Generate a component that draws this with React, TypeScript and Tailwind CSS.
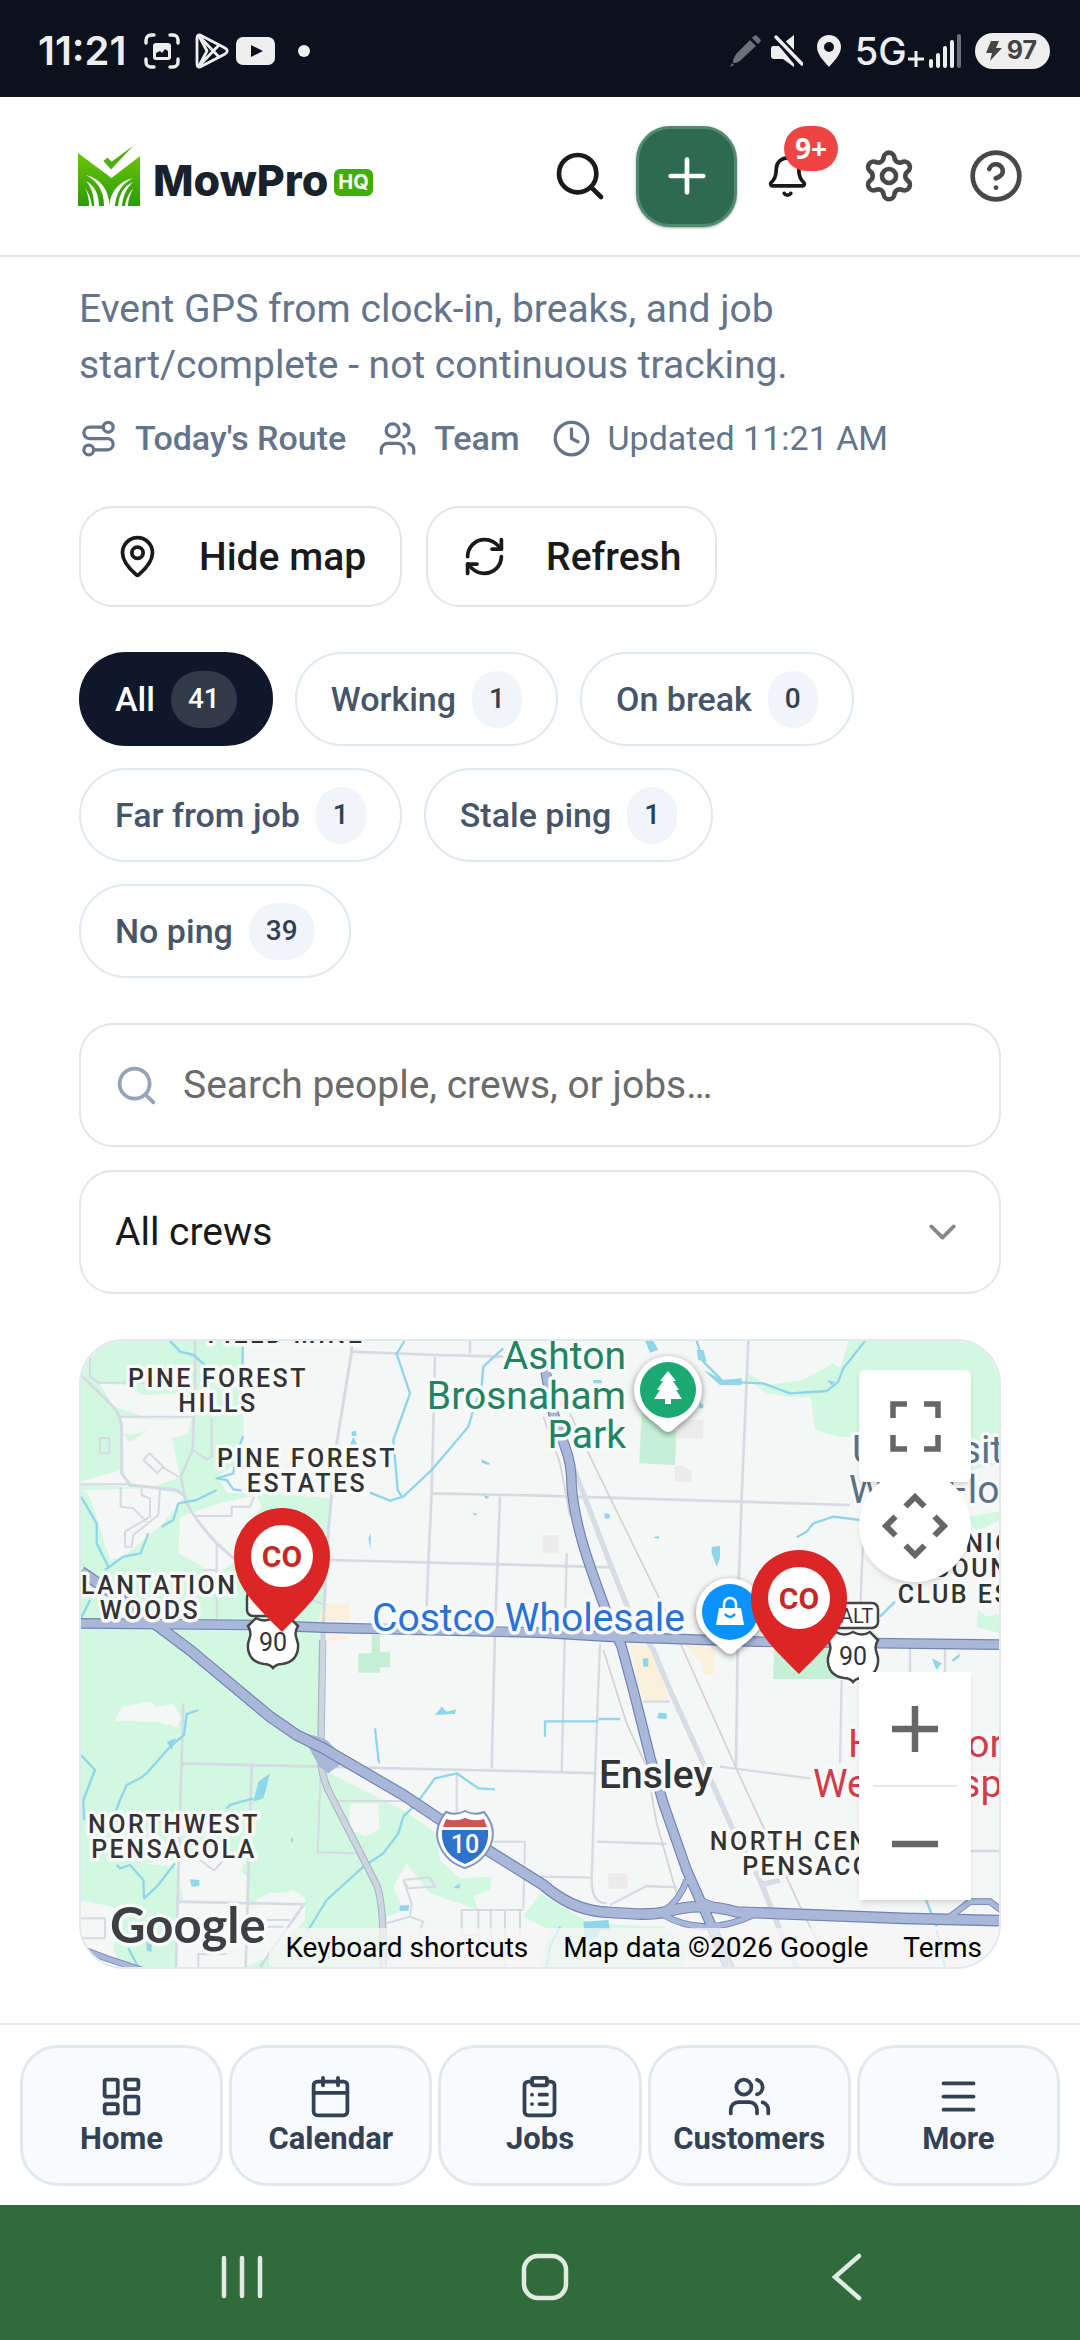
import type { ReactNode } from 'react';
import {
  Calendar,
  ChevronDown,
  CircleHelp,
  ClipboardList,
  Clock,
  LayoutDashboard,
  MapPin,
  Menu,
  Bell,
  Plus,
  RefreshCw,
  Route,
  Search,
  Settings,
  Users,
  type LucideIcon,
} from 'lucide-react';

const filters = [
  { key: 'all', label: 'All', count: 41 },
  { key: 'working', label: 'Working', count: 1 },
  { key: 'on-break', label: 'On break', count: 0 },
  { key: 'far', label: 'Far from job', count: 1 },
  { key: 'stale', label: 'Stale ping', count: 1 },
  { key: 'no-ping', label: 'No ping', count: 39 },
];

const tabs: { label: string; icon: LucideIcon }[] = [
  { label: 'Home', icon: LayoutDashboard },
  { label: 'Calendar', icon: Calendar },
  { label: 'Jobs', icon: ClipboardList },
  { label: 'Customers', icon: Users },
  { label: 'More', icon: Menu },
];

function StatusBar() {
  return (
    <div className="flex h-[97px] items-center justify-between bg-[#0b121e] pt-1 pr-[30px] pl-[38px] text-[#eeeeee]">
      <div className="flex items-center">
        <span className="font-['Inter',sans-serif] text-[40px] leading-none font-semibold">
          11:21
        </span>
        <svg className="ml-[18px] h-9 w-9" viewBox="0 0 36 36" fill="none">
          <path
            d="M2 10V7a5 5 0 0 1 5-5h3M26 2h3a5 5 0 0 1 5 5v3M34 26v3a5 5 0 0 1-5 5h-3M10 34H7a5 5 0 0 1-5-5v-3"
            stroke="currentColor"
            strokeWidth="3.4"
            strokeLinecap="round"
          />
          <rect x="9" y="10" width="18" height="17" rx="3" fill="currentColor" />
          <path d="M12 24v-4l4-2 2 2 3-4 3 2v6z" fill="#0b121e" />
        </svg>
        <svg className="ml-[15px] h-9 w-[34px]" viewBox="0 0 34 36" fill="none">
          <path
            d="M2 5v26c0 3 2 4 5 2l23-12c3-2 3-4 0-6L7 3C4 1 2 2 2 5zM4 3l20 21M4 33l20-21M4 3l8 15-8 15"
            stroke="currentColor"
            strokeWidth="2.8"
            strokeLinejoin="round"
          />
        </svg>
        <svg className="ml-[7px] h-[30px] w-10" viewBox="0 0 40 30">
          <rect x="0" y="1" width="39" height="28" rx="7" fill="currentColor" />
          <path d="M15 9l12 6-12 6z" fill="#0b121e" />
        </svg>
        <span className="ml-[22px] h-3 w-3 rounded-full bg-current" />
      </div>
      <div className="flex items-center">
        <svg className="h-8 w-8 text-[#6b6f78]" viewBox="0 0 32 32" fill="currentColor">
          <path d="M0 32l2-4 2 2zM3 28c0-5 2-7 4-10L20 5l6 6-13 12c-3 3-5 5-10 5zM22 3l2-2c1-1 2-1 3 0l3 3c1 1 1 2 0 3l-2 2z" />
        </svg>
        <svg className="ml-[9px] h-8 w-8" viewBox="0 0 32 32" fill="currentColor">
          <path d="M2 11h6l15 18v3L12 24H3c-2 0-3-1-3-3v-7c0-2 1-3 2-3zM14 7l9-7v17z" />
          <path d="M5 2l26 27" stroke="#0b121e" strokeWidth="8" />
          <path d="M5 2l26 27" stroke="currentColor" strokeWidth="3.4" strokeLinecap="round" />
        </svg>
        <svg className="ml-3.5 h-8 w-6" viewBox="0 0 24 32" fill="currentColor">
          <path
            fillRule="evenodd"
            d="M12 0c7 0 12 5 12 12 0 8-8 15-12 20C8 27 0 20 0 12 0 5 5 0 12 0zm0 7a5 5 0 1 0 0 10 5 5 0 0 0 0-10z"
          />
        </svg>
        <span className="ml-[14px] font-['Inter',sans-serif] text-[38px] leading-none font-medium">5G</span>
        <svg className="mt-4 ml-px h-4 w-4" viewBox="0 0 16 16">
          <path d="M8 0v16M0 8h16" stroke="currentColor" strokeWidth="3" />
        </svg>
        <svg className="ml-[5px] h-[34px] w-[34px]" viewBox="0 0 34 34" strokeLinecap="round" strokeWidth="4">
          <path d="M2 27v5M9 21v11M16 14v18M23 8v24" stroke="currentColor" />
          <path d="M30 2v30" stroke="#6b6f78" />
        </svg>
        <div className="ml-3 flex h-9 items-center gap-[5px] rounded-full bg-[#eeeeee] pr-[13px] pl-[11px] text-[#444444]">
          <svg className="h-5 w-4" viewBox="0 0 16 20" fill="currentColor">
            <path d="M5 0h8l-3 7h6L4 20l2-8H0z" />
          </svg>
          <span className="font-['Inter',sans-serif] text-[25px] leading-none font-bold">97</span>
        </div>
      </div>
    </div>
  );
}

function Logo() {
  return (
    <a href="#" className="flex items-center" aria-label="MowPro HQ">
      <svg className="h-[60px] w-[62px]" viewBox="0 0 62 60">
        <defs>
          <linearGradient id="leaf" x1="0" y1="0" x2="0" y2="1">
            <stop offset="0" stopColor="#6cc50c" />
            <stop offset="1" stopColor="#2b9c05" />
          </linearGradient>
        </defs>
        <path d="M0 7l33.500 25L62 10v50H0z" fill="url(#leaf)" />
        <path d="M25.500 15l4-3.500 4 4.200L55 0 33 23.500z" fill="#4fae10" />
        <g fill="#fff">
          <path d="M8 29c15 4 23 15 23.500 31H26C26 46 20 35 8 29z" />
          <path d="M8 35c9 5 13 14 13 25h-5c0-10-2-18-8-25z" />
          <path d="M7 42c4 5 6 11 7 18h-3c0-7-1-12-4-18z" />
          <path d="M55 32C42 35 33 44 31 60h6c1-12 6-22 18-28z" />
          <path d="M55 36c-9 4-14 12-15 24h4c1-10 4-17 11-24z" />
          <path d="M55 43c-4 4-7 10-8 17h3c0-6 2-11 5-17z" />
        </g>
      </svg>
      <span className="mt-2 ml-[13px] font-['Inter',sans-serif] text-[43px] leading-none font-extrabold text-[#17222c]">
        MowPro
      </span>
      <span className="mt-3 ml-1.5 rounded-md bg-[#3fae0a] px-1 font-['Inter',sans-serif] text-[20px] leading-[27px] font-bold text-white">
        HQ
      </span>
    </a>
  );
}

function Header() {
  return (
    <header className="flex h-[160px] items-center justify-between border-b-2 border-[#e5e5e5] bg-white pr-[34px] pl-[78px] shadow-[0_2px_6px_rgba(0,0,0,0.03)]">
      <Logo />
      <div className="flex items-center">
        <button aria-label="Search" className="flex h-[101px] w-[101px] items-center justify-center text-[#1a1a1a]">
          <Search size={56} />
        </button>
        <button
          aria-label="Add"
          className="ml-1.5 flex h-[101px] w-[101px] items-center justify-center rounded-[34px] border-[3px] border-[#538871] bg-[#2d6a4f] text-white shadow-sm shadow-[#2d6a4f]/40"
        >
          <Plus size={56} />
        </button>
        <button
          aria-label="Notifications"
          className="relative flex h-[101px] w-[101px] items-center justify-center text-[#1a1a1a]"
        >
          <Bell size={45} />
          <span className="absolute top-0 right-0 flex h-[45px] items-center rounded-full bg-[#ef4444] px-[11px] font-['Noto_Sans',sans-serif] text-[28px] leading-none font-bold text-white">
            9+
          </span>
        </button>
        <button aria-label="Settings" className="flex h-[101px] w-[101px] items-center justify-center text-[#484848]">
          <Settings size={56} />
        </button>
        <button aria-label="Help" className="ml-1.5 flex h-[101px] w-[101px] items-center justify-center text-[#484848]">
          <CircleHelp size={56} />
        </button>
      </div>
    </header>
  );
}

function ActionButton({ icon: Icon, children }: { icon: LucideIcon; children: ReactNode }) {
  return (
    <button className="flex h-[101px] items-center gap-[39px] rounded-[34px] border-2 border-[#e5e5e8] bg-white px-[34px] text-[39px] leading-[56px] font-medium text-[#1a1a1a]">
      <Icon size={45} />
      {children}
    </button>
  );
}

function CrewPin({ x, y }: { x: number; y: number }) {
  return (
    <g transform={`translate(${x} ${y})`}>
      <path d="M0 76C-28 48-48 30-48 0a48 48 0 0 1 96 0c0 30-20 48-48 76z" fill="#dc2626" />
      <circle r="31" fill="#fff" />
      <text y="11" textAnchor="middle" className="fill-[#c62828] text-[30px] font-bold">
        CO
      </text>
    </g>
  );
}

function PlacePin({ x, y, fill, children }: { x: number; y: number; fill: string; children: ReactNode }) {
  return (
    <g transform={`translate(${x} ${y})`}>
      <path
        d="M-5 40C-12 32-34 22-34 0a34 34 0 0 1 68 0C34 22 12 32 5 40q-5 4-10 0z"
        fill="#fff"
        className="drop-shadow-[0_2px_3px_rgba(0,0,0,0.45)]"
      />
      <circle r="28" fill={fill} />
      {children}
    </g>
  );
}

function RouteShield({ x, y }: { x: number; y: number }) {
  return (
    <g transform={`translate(${x} ${y})`}>
      <path
        d="M-17-24q8 5 17 0q9 5 17 0l8 8c-5 8-1 12 0 18 1 12-6 19-16 20q-6 0-9 4q-3-4-9-4c-10-1-17-8-16-20 1-6 5-10 0-18z"
        fill="#fff"
        stroke="#444"
        strokeWidth="2.500"
      />
      <text y="9" textAnchor="middle" className="fill-[#333333] text-[25px]">
        90
      </text>
    </g>
  );
}

const areaLabels = [
  { x: 205, y: 2, text: 'FIELD MINE' },
  { x: 137, y: 46, text: 'PINE FOREST' },
  { x: 137, y: 71, text: 'HILLS' },
  { x: 226, y: 126, text: 'PINE FOREST' },
  { x: 226, y: 151, text: 'ESTATES' },
  { x: 69, y: 253, text: 'PLANTATION' },
  { x: 69, y: 278, text: 'WOODS' },
  { x: 93, y: 492, text: 'NORTHWEST' },
  { x: 93, y: 517, text: 'PENSACOLA' },
  { x: 744, y: 509, text: 'NORTH CENTRAL' },
  { x: 744, y: 534, text: 'PENSACOLA' },
  { x: 882, y: 211, text: 'SCENIC' },
  { x: 917, y: 236, text: 'COUNTRY' },
  { x: 917, y: 262, text: 'CLUB ESTATES' },
];

const placeLabels = [
  { x: 291, y: 290, text: 'Costco Wholesale', className: 'fill-[#2a72d5]' },
  { x: 771, y: 122, text: 'University', className: 'fill-[#5a7283]' },
  { x: 768, y: 162, text: 'West Florida', className: 'fill-[#5a7283]' },
  { x: 767, y: 416, text: 'HCA Florida', className: 'fill-[#d23b4a]' },
  { x: 732, y: 456, text: 'West Hospital', className: 'fill-[#d23b4a]' },
];

const interstate = 'M33 725L180 825 360 960 600 1160 680 1215 760 1255 1000 1395 1180 1515 1420 1665Q1500 1735 1590 1745C1690 1752 1740 1757 1790 1745Q1890 1715 2000 1746L2500 1765 2787 1772';
const northSouth = 'M1415 60L1450 250 1485 350Q1505 400 1505 470C1515 600 1570 740 1615 860L1655 950 1690 1080 1740 1280 1780 1420 1850 1620 1890 1710 1930 1800 1980 1920';
const crossTown = 'M20 880L560 885 760 893 1410 908 1610 920 2060 935 2800 944';

function MapArtwork() {
  return (
    <svg
      className="block h-full w-full"
      viewBox="0 0 918 626"
      preserveAspectRatio="xMidYMid slice"
      role="img"
      aria-label="Crew map"
    >
      <rect width="918" height="626" fill="#f5f6f6" />
      {/* terrain is drawn on a grid three times finer than the labels */}
      <g transform="translate(-11 -11) scale(0.33333)" fill="none">
        <g fill="#d3f8e2">
          <path d="M0 0H520V320L495 400 445 440 470 490 600 490 780 505 765 880 748 1260 780 1330 1000 1440 1100 1510 1110 1590 1170 1645 1265 1640 1260 1680 1210 1700 1225 1740 1080 1690 1010 1600 970 1670 1000 1740 950 1760 935 1911H0z" />
          <path d="M2340 20H2800V400L2700 420 2700 320 2300 320 2235 300 2222 200 2160 200 2090 190 2035 150 2035 130 2090 165 2200 150 2290 100 2310 115z" />
          <path d="M2690 560L2790 545V570L2720 605zM2725 840L2750 860 2790 850V910L2720 890z" />
          <path d="M1360 1760L1410 1690 1560 1780 1780 1790 1860 1840 1840 1911H1410L1440 1800z" />
        </g>
        <g fill="#c5f0d5">
          <path d="M1715 250L1820 300 1815 405 1708 400zM905 915H930V965H960V1012H930V1028H865V970H905zM2112 940H2310V1047H2110z" />
        </g>
        <g fill="#f5f6f6">
          <path d="M90 160L160 165 220 195 345 190 370 260 250 268 130 230z" />
          <path d="M152 262L275 270 365 265 355 310 305 325 330 440 250 470 190 465 155 430zM33 455L155 420 175 470 33 463z" />
          <path d="M40 480L240 475 345 495 320 530 270 590 210 640 160 680 120 690 60 500z" />
          <path d="M330 560L450 520 560 495 575 530 520 600 500 690 430 740 380 700 325 670z" />
          <path d="M135 1172L155 1130 240 1115 260 1130 310 1122 332 1160 322 1190 265 1177z" />
          <path d="M840 1422L925 1420 928 1500 885 1520 862 1505 838 1510z" />
          <path d="M210 1600L320 1590 510 1575 530 1590 510 1620 530 1640 525 1911H318V1740L340 1710 320 1610z" />
          <path d="M33 1712L130 1730 150 1780 130 1850 150 1911H33z" />
          <path d="M568 1705Q600 1680 640 1690L670 1680 705 1705V1770L600 1880 525 1911V1740z" />
          <path d="M160 310Q200 320 235 295 200 330 175 335z" fill="#d3f8e2" />
        </g>
        <g fill="#faf0dc">
          <path d="M745 860L770 820H838V872H750zM775 915H838V925L780 935zM1680 940L1740 950 1800 1115H1725L1700 1050zM1840 940L1935 955 1930 1035H1905L1895 1000z" />
        </g>
        <g fill="#ececec">
          <path d="M1820 270H1900V325H1820zM1815 410L1835 405 1865 425V455H1815zM1417 615H1465V670H1417zM1615 1630H1672V1677H1615z" />
        </g>
        <g stroke="#d5dae3" strokeWidth="6">
          <path d="M33 135L130 230Q155 260 155 300V430L180 465 320 480 345 500Q350 540 440 640L520 710" strokeWidth="9" />
          <path d="M375 33V150L368 360 332 440 345 500" strokeWidth="8" />
          <path d="M60 33V140L85 158H250M150 260H370M33 463H180M90 325H118V370H90zM220 390L238 370 280 410 262 430zM275 410L325 440M368 360L410 388 425 380V265" />
          <path d="M152 470V530L190 535 230 575M215 475V495L240 505V560L165 605V650H185L190 615 265 555 270 480M370 558H485V530H540L552 500M440 640V870M400 720H440M765 825L700 800" />
          <path d="M845 65L1100 75 1300 80M1200 33V70M1095 80L1085 490 1075 700 1070 830M1085 490L1410 497 2340 525M1290 500L1275 900 1265 1315M780 690L1410 706 1625 712" strokeWidth="8" />
          <path d="M2035 33L2015 500 2005 800 1998 1310M335 1300L755 1310 1410 1325 1580 1330M340 1120L330 1450 318 1911M545 1300L527 1911M318 1715L702 1723 570 1911" strokeWidth="8" />
          <path d="M752 1330L743 1567 860 1570M800 1413H1000M1160 1330V1460M1270 1535H1365L1360 1735M1175 1740H1360M1175 1740V1815H1225V1740M1262 1740V1880M1305 1740V1911M1350 1740V1820" />
          <path d="M33 1765H105V1825H33M385 1911V1872H470M525 1790H640M590 1770H660M350 1830H400V1780H470M1000 1650L1080 1642 1095 1670 1015 1675 1000 1650 1025 1720 1020 1760 950 1780M1020 1760L1060 1775 1050 1800M390 1590L432 1622 470 1580" />
          <path d="M1490 670L1475 1325M1590 940L1575 1330 1565 1650Q1565 1720 1610 1720M1580 1535L1790 1542M1410 1640L1565 1643M1720 1115H1800M1950 1310L2220 1345M2520 950V1030M2625 950V1030M2315 1050L2310 1300M2380 620L2370 850M2700 1563H2790M1620 1725L1730 1668 1820 1672" strokeWidth="7" />
          <path d="M1480 330L1540 490 1620 700 1680 850 1750 960 1800 1080 1900 1300 1985 1490 2070 1650 2130 1800 2180 1911M2070 1665L2130 1650" strokeWidth="16" stroke="#d6dde5" />
          <path d="M1500 250L1570 400 1780 830 1840 960 2010 1340 2200 1750 2270 1890M1420 260L1470 400 1500 560M1600 960L1670 1180 1730 1310 1760 1480 1820 1690" strokeWidth="5" stroke="#d3d3d3" />
        </g>
        <g stroke="#8fd6ea" strokeWidth="7" strokeLinejoin="round">
          <path d="M300 33L330 65 370 75 410 110M518 33V110M520 318L500 370 490 430 440 445 470 450 490 478 515 482M440 480L380 510 325 520 310 570 275 590M33 500L80 580 80 640 115 710M235 610L212 670 160 680 105 720M60 810L33 865" />
          <path d="M1003 33L980 72 1020 190 970 330 983 480 995 500M900 488L960 512 1000 500 1085 420 1195 290 1210 240 1235 170 1240 110 1300 55" />
          <path d="M1880 33L1900 95 1960 155 2080 160 2160 190 2270 183 2305 155 2320 115 2385 33M2180 622L2210 605 2230 580 2290 560 2370 570M2430 860L2475 815" />
          <path d="M385 1140L350 1152 342 1215 300 1250 230 1330 210 1345 170 1365 150 1410 135 1450M33 1275L75 1320 40 1410 42 1470M140 1605L150 1615 180 1605 220 1650 222 1705 260 1670 315 1600M470 1435L480 1425 550 1405M175 1855L205 1911" />
          <path d="M1275 1378L1225 1375 1160 1330 1095 1345 1040 1420 1000 1460 985 1510 940 1570 880 1610 770 1710 715 1800M915 1195L927 1300M1425 1220V1174H1585M1585 1167H1650M2568 1710L2580 1740 2600 1790M1430 1911L1440 1850 1470 1790M2625 1911L2600 1800" />
        </g>
        <g fill="#8fd6ea">
          <path d="M1725 33H1750L1765 60 1740 68zM1880 60H1900L1910 95 1885 90zM1900 120L1960 150 2015 145V165L1950 165zM1570 150H1595V160H1570zM840 345L850 320 862 345zM845 305L858 302 860 318H845zM1235 388L1260 400 1255 405 1235 398zM1240 495L1258 500 1250 508zM1208 548L1222 550 1215 558zM895 625L902 610V660z" />
          <path d="M1925 650L1950 648V685L1940 710 1925 670zM1603 550L1618 552 1620 565 1605 566zM1750 622L1765 618 1768 627zM550 1415L565 1355 600 1330 590 1370 580 1405zM290 1235L318 1225 305 1260zM1095 1155L1115 1130 1130 1145 1158 1138 1155 1152zM360 1648L388 1650V1668L365 1670zM990 1727L1018 1725 1015 1742H988zM1150 1675L1168 1660 1170 1675zM660 1530L668 1520V1540z" />
          <path d="M1540 1775L1615 1770 1620 1800 1590 1800 1580 1825 1545 1830zM1718 985L1735 985 1735 1010 1720 1010zM1765 1148L1790 1150V1168L1762 1165zM2585 985L2615 1000 2600 1020zM2645 990L2670 970 2668 982 2650 995zM230 1835L245 1840V1865L230 1862zM1890 220L1900 222V235L1885 235zM2270 150L2295 155 2285 165z" />
        </g>
        <path d="M758 930L752 1290Q755 1350 790 1410L920 1665Q942 1720 940 1911" stroke="#a8b2c2" strokeWidth="22" />
        <path d="M845 33V65L800 340 775 600 760 880" stroke="#d5dae3" strokeWidth="9" />
        <path d="M760 880L752 1290Q755 1350 790 1410L920 1665Q942 1720 940 1911" stroke="#cdd5e1" strokeWidth="16" />
        <path d="M690 1205L745 1220 770 1230 830 1290 775 1330 748 1310z" fill="#a9b8d9" />
        <g stroke="#7083b6">
          <path d={northSouth} strokeWidth="32" />
          <path d={crossTown} strokeWidth="32" />
          <path d={interstate} strokeWidth="35" />
          <path d="M1780 1755Q1900 1825 2050 1755M30 1855L110 1885 230 1925M1850 1650Q1830 1710 1780 1745M1890 1710L1990 1750M2640 1760L2700 1715H2760L2800 1745" strokeWidth="20" />
        </g>
        <g stroke="#a9b8d9">
          <path d={northSouth} strokeWidth="25" />
          <path d={crossTown} strokeWidth="25" />
          <path d={interstate} strokeWidth="28" />
          <path d="M1780 1755Q1900 1825 2050 1755M30 1855L110 1885 230 1925M1850 1650Q1830 1710 1780 1745M1890 1710L1990 1750M2640 1760L2700 1715H2760L2800 1745" strokeWidth="15" />
        </g>
      </g>

      <g stroke="#f8f9f9" strokeWidth="7" strokeLinejoin="round" className="[paint-order:stroke]">
        {areaLabels.map((label) => (
          <text
            key={`${label.text}${label.y}`}
            x={label.x}
            y={label.y}
            textAnchor="middle"
            className="fill-[#333333] text-[25px] font-medium tracking-widest"
          >
            {label.text}
          </text>
        ))}
        {placeLabels.map((label) => (
          <text key={label.text} x={label.x} y={label.y} className={`text-[39px] ${label.className}`}>
            {label.text}
          </text>
        ))}
        <g textAnchor="end" className="fill-[#208461] text-[39px]">
          <text x="545" y="28">Ashton</text>
          <text x="545" y="68">Brosnaham</text>
          <text x="545" y="107">Park</text>
        </g>
        <text x="518" y="447" className="fill-[#333333] text-[39px] font-medium">
          Ensley
        </text>
        <text x="29" y="602" className="fill-[#3c4043] font-['Lato',sans-serif] text-[49px] font-bold">
          Google
        </text>
      </g>

      <rect x="166" y="250" width="42" height="25" rx="6" fill="#fff" stroke="#444" strokeWidth="2.500" />
      <RouteShield x={192} y={301} />
      <rect x="750" y="262" width="47" height="25" rx="6" fill="#fff" stroke="#444" strokeWidth="2.500" />
      <text x="759" y="282" className="fill-[#333333] text-[20px]">
        ALT
      </text>
      <RouteShield x={772} y={315} />
      <g transform="translate(384 498)">
        <path
          d="M-19-27q10 4 19-1q9 5 19 1q13 16 7 32-7 18-26 24-19-6-26-24-6-16 7-32z"
          fill="#fff"
          stroke="#8494bd"
          strokeWidth="2"
        />
        <path d="M-19-20q10 3 19-1q9 4 19 1l3 8h-44z" fill="#d0545c" />
        <path d="M-23-9h46q2 24-23 34Q-25 15-23-9z" fill="#2f72cb" />
        <text y="14" textAnchor="middle" className="fill-white text-[25px] font-medium">
          10
        </text>
      </g>

      <PlacePin x={587} y={49} fill="#1aa873">
        <path d="M0-19l8 10H5l6 9H8l6 9H3v5h-6V9h-11l6-9h-3l6-9h-3z" fill="#fff" />
      </PlacePin>
      <PlacePin x={649} y={271} fill="#0a93ff">
        <path d="M-11-4h22l3 17h-28z" fill="#fff" />
        <path d="M-6-3v-5a6 6 0 0 1 12 0v5" fill="none" stroke="#fff" strokeWidth="2.500" />
        <path d="M-5 2q5 6 10 0" fill="none" stroke="#0a93ff" strokeWidth="2.500" />
      </PlacePin>
      <CrewPin x={201} y={215} />
      <CrewPin x={718} y={257} />
    </svg>
  );
}

function MapControls() {
  return (
    <div className="absolute top-[29px] right-7 bottom-[67px] flex flex-col justify-between text-[#666666]">
      <div>
        <button aria-label="Toggle fullscreen" className="flex h-28 w-28 items-center justify-center rounded-md bg-white shadow-md">
          <svg className="h-[51px] w-[51px]" viewBox="0 0 51 51" fill="none" stroke="currentColor" strokeWidth="5.500">
            <path d="M3 17V3h14M34 3h14v14M48 34v14H34M17 48H3V34" />
          </svg>
        </button>
        <button
          aria-label="Map camera controls"
          className="relative -mt-3 flex h-28 w-28 items-center justify-center rounded-full bg-white shadow-md"
        >
          <svg className="h-[66px] w-[66px]" viewBox="0 0 66 66" fill="none" stroke="currentColor" strokeWidth="6">
            <path d="M23.500 13.500L33 4l9.500 9.500M23.500 52.500L33 62l9.500-9.500M13.500 23.500L4 33l9.500 9.500M52.500 23.500L62 33l-9.500 9.500" />
          </svg>
        </button>
      </div>
      <div className="flex w-28 flex-col items-center bg-white shadow-md">
        <button aria-label="Zoom in" className="flex h-[113px] w-full items-center justify-center">
          <svg className="h-[46px] w-[46px]" viewBox="0 0 46 46" stroke="currentColor" strokeWidth="6.500">
            <path d="M23 0v46M0 23h46" />
          </svg>
        </button>
        <div className="h-0.5 w-[84px] bg-[#e6e6e6]" />
        <button aria-label="Zoom out" className="flex h-[113px] w-full items-center justify-center">
          <svg className="h-[46px] w-[46px]" viewBox="0 0 46 46" stroke="currentColor" strokeWidth="6.500">
            <path d="M0 23h46" />
          </svg>
        </button>
      </div>
    </div>
  );
}

function CrewMap() {
  return (
    <section className="relative mt-[45px] h-[630px] overflow-hidden rounded-[45px] border-2 border-[#e2e8f0]">
      <MapArtwork />
      <MapControls />
      <div className="absolute right-0 bottom-0 flex h-[39px] items-center gap-[35px] bg-[#f5f5f5]/75 pr-[17px] pl-4 text-[28px] leading-none text-black">
        <button>Keyboard shortcuts</button>
        <span>Map data ©2026 Google</span>
        <a href="#">Terms</a>
      </div>
    </section>
  );
}

function TabBar() {
  return (
    <nav className="grid grid-cols-5 gap-1.5 border-t-2 border-[#e2e8f0] bg-white px-5 pt-5 pb-[19px]">
      {tabs.map(({ label, icon: Icon }) => (
        <a
          key={label}
          href="#"
          className="flex h-[141px] flex-col items-center justify-center rounded-[38px] border-[3px] border-[#e2e8f0] bg-[#f8fafc] text-[31px] leading-[39px] font-bold text-[#334155]"
        >
          <Icon size={45} />
          {label}
        </a>
      ))}
    </nav>
  );
}

function SystemBar() {
  return (
    <div className="flex h-[135px] items-center justify-between bg-[#306b3b] pt-2 pr-[209px] pl-[218px] text-[#e2ebe2]">
      <button aria-label="Recent apps">
        <svg className="h-12 w-12" viewBox="0 0 48 48" stroke="currentColor" strokeWidth="4.500" strokeLinecap="round">
          <path d="M6 5v38M24 5v38M42 5v38" />
        </svg>
      </button>
      <button aria-label="Home screen">
        <svg className="h-12 w-12" viewBox="0 0 48 48" fill="none" stroke="currentColor" strokeWidth="4.500">
          <rect x="3" y="3" width="42" height="42" rx="14" />
        </svg>
      </button>
      <button aria-label="Back">
        <svg
          className="h-12 w-12"
          viewBox="0 0 48 48"
          fill="none"
          stroke="currentColor"
          strokeWidth="4.500"
          strokeLinecap="round"
        >
          <path d="M36 3L12 24l24 21" />
        </svg>
      </button>
    </div>
  );
}

export default function App() {
  return (
    <div className="flex min-h-screen flex-col bg-white font-['Roboto',sans-serif]">
      <StatusBar />
      <Header />
      <main className="flex-1 px-[79px] pt-6 pb-[54px]">
        <p className="text-[39px] leading-[56px] text-[#64748b]">
          Event GPS from clock-in, breaks, and job start/complete - not continuous tracking.
        </p>
        <div className="mt-[23px] flex flex-wrap items-center gap-x-8 text-[34px] leading-[45px] text-[#64748b]">
          <a href="#" className="flex items-center gap-[17px] font-medium">
            <Route size={39} />
            Today's Route
          </a>
          <a href="#" className="flex items-center gap-[17px] font-medium">
            <Users size={39} />
            Team
          </a>
          <span className="flex items-center gap-[17px]">
            <Clock size={39} />
            Updated 11:21 AM
          </span>
        </div>
        <div className="mt-[45px] flex gap-6">
          <ActionButton icon={MapPin}>Hide map</ActionButton>
          <ActionButton icon={RefreshCw}>Refresh</ActionButton>
        </div>
        <div className="mt-[45px] flex flex-wrap gap-[22px]">
          {filters.map((filter) => {
            const isActive = filter.key === 'all';
            return (
              <button
                key={filter.key}
                aria-pressed={isActive}
                className={`flex h-[94px] items-center gap-4 rounded-full border-2 px-[34px] text-[34px] leading-[45px] font-medium ${
                  isActive
                    ? 'border-[#0f172a] bg-[#0f172a] text-white'
                    : 'border-[#e2e8f0] bg-white text-[#475569]'
                }`}
              >
                {filter.label}
                <span
                  className={`flex h-[57px] items-center rounded-full px-[17px] text-[28px] leading-none ${
                    isActive ? 'bg-white/15 text-white' : 'bg-[#f1f5f9] text-[#334155]'
                  }`}
                >
                  {filter.count}
                </span>
              </button>
            );
          })}
        </div>
        <label className="mt-[45px] flex h-[124px] items-center gap-6 rounded-[34px] border-2 border-[#e5e5e8] bg-white px-[33px]">
          <Search size={45} className="shrink-0 text-[#94a3b8]" />
          <input
            type="search"
            aria-label="Search people, crews, or jobs"
            placeholder="Search people, crews, or jobs…"
            className="w-full bg-transparent text-[39px] leading-[56px] text-[#1a1a1a] outline-none placeholder:text-[#6b6b6b]"
          />
        </label>
        <div className="relative mt-[23px]">
          <select
            aria-label="Crew"
            className="block h-[124px] w-full appearance-none rounded-[34px] border-2 border-[#e5e5e8] bg-white px-[34px] text-[39px] leading-[56px] text-[#1a1a1a]"
          >
            <option>All crews</option>
          </select>
          <ChevronDown
            size={45}
            className="pointer-events-none absolute top-1/2 right-9 -translate-y-1/2 text-[#888888]"
          />
        </div>
        <CrewMap />
      </main>
      <TabBar />
      <SystemBar />
    </div>
  );
}
